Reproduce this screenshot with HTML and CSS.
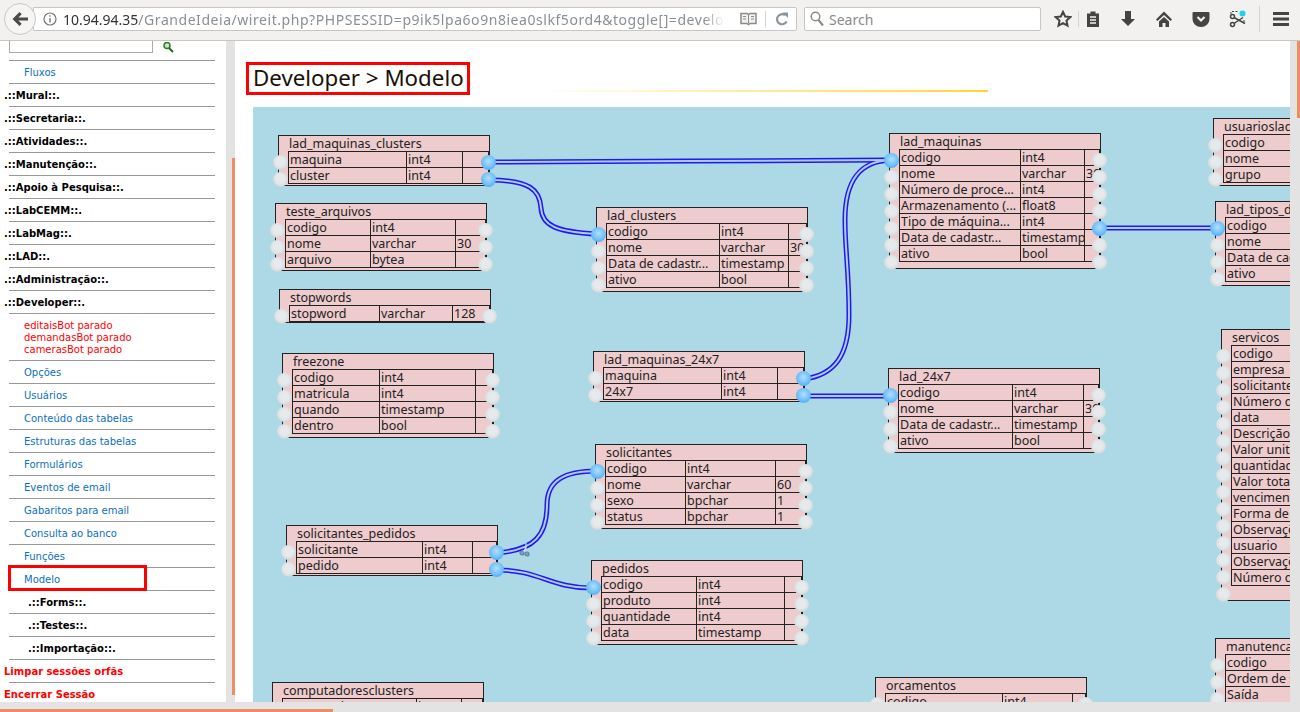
FILE: index.html
```html
<!DOCTYPE html>
<html lang="en">
<head>
  <meta charset="UTF-8">
  <title>Developer &gt; Modelo</title>
  <link rel="stylesheet" href="styles.css">
</head>
<body>
  <!-- Browser toolbar -->
  <header class="toolbar">
    <button class="back">
      <svg width="18" height="18" viewBox="0 0 18 18"><path d="M1.500 9l7-7 2.200 2.200-3.300 3.200H17v3.200H7.400l3.300 3.200-2.200 2.200z" fill="#4a4a4a"/></svg>
    </button>
    <div class="urlbar">
      <svg class="info" width="14" height="14" viewBox="0 0 14 14"><circle cx="7" cy="7" r="6" fill="none" stroke="#777" stroke-width="1.200"/><path d="M6.300 6h1.400v4.500H6.300zM6.300 3.300h1.400v1.400H6.300z" fill="#777"/></svg>
      <span class="url"><b>10.94.94.35</b>/GrandeIdeia/wireit.php?PHPSESSID=p9ik5lpa6o9n8iea0slkf5ord4&amp;toggle[]=developer</span>
      <svg class="book" width="17" height="14" viewBox="0 0 17 14"><path d="M1 1.500h6l1.500 1 1.500-1h6v10h-6l-1.500 1-1.500-1H1z" fill="#f2f1ef" stroke="#8a8a8a" stroke-width="1.500"/><path d="M8.500 3v8M3 4.500h3M3 7h3M11 4.500h3M11 7h3" stroke="#8a8a8a"/></svg>
      <span class="url-sep"></span>
      <svg class="reload" width="14" height="14" viewBox="0 0 14 14"><path d="M11.500 9.500A5 5 0 1 1 10 3.200" fill="none" stroke="#8a949c" stroke-width="2.200"/><path d="M7.500 0.500h5.500v5.500z" fill="#8a949c"/></svg>
    </div>
    <div class="searchbar">
      <svg width="14" height="16" viewBox="0 0 14 16"><circle cx="5.500" cy="5.500" r="4.300" fill="none" stroke="#8a8a8a" stroke-width="1.500"/><path d="M8.500 9l4.500 5.500" stroke="#8a8a8a" stroke-width="2"/></svg>
      <span>Search</span>
    </div>
    <div class="tools">
      <svg class="tool-star" width="18" height="18" viewBox="0 0 18 18"><path d="M9 1.800l2.200 4.700 5.100.6-3.800 3.500 1 5.100L9 13.200l-4.500 2.500 1-5.100-3.800-3.500 5.100-.6z" fill="none" stroke="#444" stroke-width="2"/></svg>
      <span class="tool-sep"></span>
      <svg class="tool-clip" width="16" height="18" viewBox="0 0 16 18"><path d="M2 3.500h3.500V1.500h5v2H14V17H2z" fill="#444"/><path d="M5 7h6M5 10h6M5 13h6" stroke="#f2f1ef" stroke-width="1.400"/></svg>
      <svg class="tool-down" width="16" height="18" viewBox="0 0 16 18"><path d="M5 1h6v8h4l-7 7-7-7h4z" fill="#444"/></svg>
      <svg class="tool-home" width="18" height="18" viewBox="0 0 18 18"><path d="M9 1.500L1 9.500l1.500 1.500L9 5l6.500 6 1.500-1.500z" fill="#444"/><path d="M4 11.500L9 7l5 4.500V17h-3.500v-4h-3v4H4z" fill="#444"/></svg>
      <svg class="tool-pocket" width="18" height="18" viewBox="0 0 18 18"><path d="M1.500 2h15a1 1 0 0 1 1 1v6a8.500 8 0 0 1-17 0V3a1 1 0 0 1 1-1z" fill="#444"/><path d="M5.500 7L9 10.500 12.500 7" fill="none" stroke="#f2f1ef" stroke-width="2.200"/></svg>
      <svg class="tool-cut" width="18" height="18" viewBox="0 0 18 18"><circle cx="3.500" cy="14.500" r="2" fill="none" stroke="#444" stroke-width="1.500"/><circle cx="3.500" cy="6.500" r="2" fill="none" stroke="#444" stroke-width="1.500"/><path d="M5 7.500l11 6M5 13.500l9-6" stroke="#444" stroke-width="1.500"/><path d="M3 1.500h7M2 2v2M15 10v3" stroke="#444" stroke-dasharray="2 1.500"/><circle cx="13.500" cy="3.500" r="3" fill="#12d5ef"/></svg>
      <span class="tool-sep tool-sep-wide"></span>
      <svg class="tool-menu" width="18" height="18" viewBox="0 0 18 18"><path d="M1 3.500h16M1 9h16M1 14.500h16" stroke="#444" stroke-width="2.800"/></svg>
    </div>
  </header>

  <div class="page">
    <div class="page-row">
      <!-- Left menu frame -->
      <nav class="sidebar">
        <div class="menu-search">
          <input type="text" class="menu-input">
          <svg width="11" height="11" viewBox="0 0 11 11"><circle cx="4" cy="3.500" r="3" fill="#cfe8c0" stroke="#2f7d2f" stroke-width="1.500"/><path d="M6 6l4 4" stroke="#1f6a1f" stroke-width="2"/></svg>
        </div>
        <a class="item link">Fluxos</a>
        <a class="item head">.::Mural::.</a>
        <a class="item head">.::Secretaria::.</a>
        <a class="item head">.::Atividades::.</a>
        <a class="item head">.::Manutenção::.</a>
        <a class="item head">.::Apoio à Pesquisa::.</a>
        <a class="item head">.::LabCEMM::.</a>
        <a class="item head">.::LabMag::.</a>
        <a class="item head">.::LAD::.</a>
        <a class="item head">.::Administração::.</a>
        <a class="item head">.::Developer::.</a>
        <div class="item bots">editaisBot parado<br>demandasBot parado<br>camerasBot parado</div>
        <a class="item link">Opções</a>
        <a class="item link">Usuários</a>
        <a class="item link">Conteúdo das tabelas</a>
        <a class="item link">Estruturas das tabelas</a>
        <a class="item link">Formulários</a>
        <a class="item link">Eventos de email</a>
        <a class="item link">Gabaritos para email</a>
        <a class="item link">Consulta ao banco</a>
        <a class="item link">Funções</a>
        <a class="item link">Modelo</a>
        <a class="item head sub">.::Forms::.</a>
        <a class="item head sub">.::Testes::.</a>
        <a class="item head sub">.::Importação::.</a>
        <a class="item danger">Limpar sessões orfãs</a>
        <a class="item danger">Encerrar Sessão</a>
        <span class="mark-modelo"></span>
      </nav>
      <div class="frame-scroll"><span class="frame-thumb"></span></div>

      <!-- Content frame -->
      <main class="content">
        <div class="title-row">
          <h1 class="title">Developer &gt; Modelo</h1>
          <span class="title-rule"></span>
        </div>
        <div class="canvas">
          <div class="node n-clusters">
            <div class="node-title">lad_maquinas_clusters</div>
            <table><tr><td>maquina</td><td>int4</td><td></td></tr><tr><td>cluster</td><td>int4</td><td></td></tr></table>
            <div class="terms left"><i></i><i></i></div>
            <div class="terms right"><i class="on"></i><i class="on"></i></div>
          </div>
          <div class="node n-arquivos">
            <div class="node-title">teste_arquivos</div>
            <table><tr><td>codigo</td><td>int4</td><td></td></tr><tr><td>nome</td><td>varchar</td><td>30</td></tr><tr><td>arquivo</td><td>bytea</td><td></td></tr></table>
            <div class="terms left"><i></i><i></i><i></i></div>
            <div class="terms right"><i></i><i></i><i></i></div>
          </div>
          <div class="node n-lclusters">
            <div class="node-title">lad_clusters</div>
            <table><tr><td>codigo</td><td>int4</td><td></td></tr><tr><td>nome</td><td>varchar</td><td>30</td></tr><tr><td>Data de cadastr...</td><td>timestamp</td><td></td></tr><tr><td>ativo</td><td>bool</td><td></td></tr></table>
            <div class="terms left"><i class="on"></i><i></i><i></i><i></i></div>
            <div class="terms right"><i></i><i></i><i></i><i></i></div>
          </div>
          <div class="node n-stopwords">
            <div class="node-title">stopwords</div>
            <table><tr><td>stopword</td><td>varchar</td><td>128</td></tr></table>
            <div class="terms left"><i></i></div>
            <div class="terms right"><i></i></div>
          </div>
          <div class="node n-freezone">
            <div class="node-title">freezone</div>
            <table><tr><td>codigo</td><td>int4</td><td></td></tr><tr><td>matricula</td><td>int4</td><td></td></tr><tr><td>quando</td><td>timestamp</td><td></td></tr><tr><td>dentro</td><td>bool</td><td></td></tr></table>
            <div class="terms left"><i></i><i></i><i></i><i></i></div>
            <div class="terms right"><i></i><i></i><i></i><i></i></div>
          </div>
          <div class="node n-m24">
            <div class="node-title">lad_maquinas_24x7</div>
            <table><tr><td>maquina</td><td>int4</td><td></td></tr><tr><td>24x7</td><td>int4</td><td></td></tr></table>
            <div class="terms left"><i></i><i></i></div>
            <div class="terms right"><i class="on"></i><i class="on"></i></div>
          </div>
          <div class="node n-l24">
            <div class="node-title">lad_24x7</div>
            <table><tr><td>codigo</td><td>int4</td><td></td></tr><tr><td>nome</td><td>varchar</td><td>30</td></tr><tr><td>Data de cadastr...</td><td>timestamp</td><td></td></tr><tr><td>ativo</td><td>bool</td><td></td></tr></table>
            <div class="terms left"><i class="on"></i><i></i><i></i><i></i></div>
            <div class="terms right"><i></i><i></i><i></i><i></i></div>
          </div>
          <div class="node n-maquinas">
            <div class="node-title">lad_maquinas</div>
            <table><tr><td>codigo</td><td>int4</td><td></td></tr><tr><td>nome</td><td>varchar</td><td>30</td></tr><tr><td>Número de proce...</td><td>int4</td><td></td></tr><tr><td>Armazenamento (...</td><td>float8</td><td></td></tr><tr><td>Tipo de máquina...</td><td>int4</td><td></td></tr><tr><td>Data de cadastr...</td><td>timestamp</td><td></td></tr><tr><td>ativo</td><td>bool</td><td></td></tr></table>
            <div class="terms left"><i class="on"></i><i></i><i></i><i></i><i></i><i></i><i></i></div>
            <div class="terms right"><i></i><i></i><i></i><i></i><i class="on"></i><i></i><i></i></div>
          </div>
          <div class="node n-solic">
            <div class="node-title">solicitantes</div>
            <table><tr><td>codigo</td><td>int4</td><td></td></tr><tr><td>nome</td><td>varchar</td><td>60</td></tr><tr><td>sexo</td><td>bpchar</td><td>1</td></tr><tr><td>status</td><td>bpchar</td><td>1</td></tr></table>
            <div class="terms left"><i class="on"></i><i></i><i></i><i></i></div>
            <div class="terms right"><i></i><i></i><i></i><i></i></div>
          </div>
          <div class="node n-solped">
            <div class="node-title">solicitantes_pedidos</div>
            <table><tr><td>solicitante</td><td>int4</td><td></td></tr><tr><td>pedido</td><td>int4</td><td></td></tr></table>
            <div class="terms left"><i></i><i></i></div>
            <div class="terms right"><i class="on"></i><i class="on"></i></div>
          </div>
          <div class="node n-pedidos">
            <div class="node-title">pedidos</div>
            <table><tr><td>codigo</td><td>int4</td><td></td></tr><tr><td>produto</td><td>int4</td><td></td></tr><tr><td>quantidade</td><td>int4</td><td></td></tr><tr><td>data</td><td>timestamp</td><td></td></tr></table>
            <div class="terms left"><i class="on"></i><i></i><i></i><i></i></div>
            <div class="terms right"><i></i><i></i><i></i><i></i></div>
          </div>
          <div class="node n-comp">
            <div class="node-title">computadoresclusters</div>
            <table><tr><td>computador</td><td>int4</td><td></td></tr><tr><td>cluster</td><td>int4</td><td></td></tr></table>
          </div>
          <div class="node n-orc">
            <div class="node-title">orcamentos</div>
            <table><tr><td>codigo</td><td>int4</td><td></td></tr><tr><td>nome</td><td>varchar</td><td></td></tr></table>
            <div class="terms left"><i></i></div>
            <div class="terms right"><i></i></div>
          </div>
          <div class="node n-usu">
            <div class="node-title">usuarioslad</div>
            <table><tr><td>codigo</td><td>int4</td><td></td></tr><tr><td>nome</td><td>varchar</td><td></td></tr><tr><td>grupo</td><td>int4</td><td></td></tr></table>
            <div class="terms left"><i></i><i></i><i></i></div>
          </div>
          <div class="node n-tipos">
            <div class="node-title">lad_tipos_de_maquinas</div>
            <table><tr><td>codigo</td><td>int4</td><td></td></tr><tr><td>nome</td><td>varchar</td><td></td></tr><tr><td>Data de cadastr...</td><td>timestamp</td><td></td></tr><tr><td>ativo</td><td>bool</td><td></td></tr></table>
            <div class="terms left"><i class="on"></i><i></i><i></i><i></i></div>
          </div>
          <div class="node n-serv">
            <div class="node-title">servicos</div>
            <table><tr><td>codigo</td><td>int4</td><td></td></tr><tr><td>empresa</td><td>int4</td><td></td></tr><tr><td>solicitante</td><td>int4</td><td></td></tr><tr><td>Número de pedido</td><td>int4</td><td></td></tr><tr><td>data</td><td>date</td><td></td></tr><tr><td>Descrição</td><td>text</td><td></td></tr><tr><td>Valor unitário</td><td>float8</td><td></td></tr><tr><td>quantidade</td><td>int4</td><td></td></tr><tr><td>Valor total</td><td>float8</td><td></td></tr><tr><td>vencimento</td><td>date</td><td></td></tr><tr><td>Forma de pag</td><td>text</td><td></td></tr><tr><td>Observações</td><td>text</td><td></td></tr><tr><td>usuario</td><td>int4</td><td></td></tr><tr><td>Observações</td><td>text</td><td></td></tr><tr><td>Número de nota</td><td>int4</td><td></td></tr></table>
            <div class="terms left"><i></i><i></i><i></i><i></i><i></i><i></i><i></i><i></i><i></i><i></i><i></i><i></i><i></i><i></i><i></i></div>
          </div>
          <div class="node n-manut">
            <div class="node-title">manutencao</div>
            <table><tr><td>codigo</td><td>int4</td><td></td></tr><tr><td>Ordem de serviço</td><td>int4</td><td></td></tr><tr><td>Saída</td><td>date</td><td></td></tr></table>
            <div class="terms left"><i></i><i></i><i></i></div>
          </div>

          <!-- Wires between the tables, in page coordinates -->
          <svg class="wires" width="1037" height="595">
            <g transform="translate(-253 -107)">
              <g class="wire-out">
                <path d="M489 162C600 162 780 160 891 160"/>
                <path d="M489 180C530 180 540 190 541 208C542 225 555 232 597 234"/>
                <path d="M804 379C835 375 849 355 849 315C849 270 845 250 845 220C845 180 860 161 891 160"/>
                <path d="M804 396H890"/>
                <path d="M1100 228H1217"/>
                <path d="M497 553C535 550 547 535 547 505C547 480 565 471 597 471"/>
                <path d="M497 570C540 570 550 588 592 588"/>
              </g>
              <g class="wire-in">
                <path d="M489 162C600 162 780 160 891 160"/>
                <path d="M489 180C530 180 540 190 541 208C542 225 555 232 597 234"/>
                <path d="M804 379C835 375 849 355 849 315C849 270 845 250 845 220C845 180 860 161 891 160"/>
                <path d="M804 396H890"/>
                <path d="M1100 228H1217"/>
                <path d="M497 553C535 550 547 535 547 505C547 480 565 471 597 471"/>
                <path d="M497 570C540 570 550 588 592 588"/>
              </g>
            </g>
          </svg>
          <svg class="scissor" width="12" height="14" viewBox="0 0 12 14"><circle cx="3" cy="10" r="2" fill="#7da4c0" stroke="#5d86a5" stroke-width="1.200"/><circle cx="8" cy="11" r="2" fill="#7da4c0" stroke="#5d86a5" stroke-width="1.200"/><path d="M7 8L7 0M5 9L7 3" stroke="#c5dbe8" stroke-width="1.200"/></svg>
        </div>
      </main>
      <div class="page-scroll"><span class="page-thumb"></span></div>
    </div>
    <div class="bottom-scroll"><span class="bottom-thumb"></span></div>
  </div>
</body>
</html>
```
FILE: styles.css
```css
/* General styles */
* {
  box-sizing: border-box;
}

html, body {
  margin: 0;
  height: 100%;
  overflow: hidden;
}

body {
  display: flex;
  flex-direction: column;
  font-family: "DejaVu Sans", sans-serif;
  background-color: #fff;
}

/* Browser toolbar */
.toolbar {
  display: flex;
  align-items: center;
  height: 41px;
  flex: none;
  padding: 0 0 2px 4px;
  background-color: #f2f1ef;
  border-bottom: 1px solid #c8c6c3;
  font-family: "Noto Sans", sans-serif;
}

.back {
  display: flex;
  align-items: center;
  justify-content: center;
  width: 32px;
  height: 32px;
  flex: none;
  padding: 0;
  border: 1px solid #c9c7c4;
  border-radius: 50%;
  background-color: #f6f5f3;
  position: relative;
  z-index: 1;
}

.urlbar {
  display: flex;
  align-items: center;
  width: 764px;
  height: 24px;
  margin-left: -3px;
  padding-left: 9px;
  background-color: #fff;
  border: 1px solid #c8c6c3;
  border-radius: 0 2px 2px 0;
}

.url {
  margin-left: 6px;
  width: 668px;
  flex: none;
  overflow: hidden;
  white-space: nowrap;
  font-size: 14px;
  letter-spacing: 0.55px;
  color: #8a8f93;
  -webkit-mask-image: linear-gradient(to right, #000 96%, transparent 99%);
  mask-image: linear-gradient(to right, #000 96%, transparent 99%);
}

.url b {
  font-weight: 400;
  letter-spacing: 0;
  color: #333;
}

.book {
  margin-left: 9px;
  flex: none;
}

.url-sep {
  width: 1px;
  height: 16px;
  margin-left: 8px;
  background-color: #d5d3d0;
  flex: none;
}

.reload {
  margin-left: 9px;
  flex: none;
}

.searchbar {
  display: flex;
  align-items: center;
  gap: 5px;
  width: 237px;
  height: 24px;
  margin-left: 7px;
  padding-left: 5px;
  background-color: #fff;
  border: 1px solid #c8c6c3;
  border-radius: 2px;
  font-size: 14px;
  color: #8a8a8a;
}

.tools {
  display: flex;
  align-items: center;
  margin-left: 13px;
}

.tools svg {
  flex: none;
}

.tool-sep {
  width: 1px;
  height: 16px;
  margin: 0 6px 0 6px;
  background-color: #d5d3d0;
}

.tool-sep-wide {
  height: 26px;
  margin: 0 12px 0 12px;
}

.tool-down, .tool-home, .tool-pocket, .tool-cut {
  margin-left: 19px;
}

/* Page area with frames */
.page {
  flex: 1;
  display: flex;
  flex-direction: column;
  min-height: 0;
}

.page-row {
  flex: 1;
  display: flex;
  min-height: 0;
}

.bottom-scroll {
  height: 10px;
  flex: none;
  display: flex;
  align-items: flex-end;
  background-color: #e3e3e3;
}

.bottom-thumb {
  display: block;
  width: 333px;
  height: 3px;
  background-color: #f08c64;
}

/* Left menu */
.sidebar {
  position: relative;
  width: 226px;
  flex: none;
  padding-left: 9px;
  overflow: hidden;
  font-size: 10px;
}

.menu-search {
  display: flex;
  align-items: flex-start;
  height: 20px;
  width: 206px;
  border-bottom: 1px solid #999;
}

.menu-input {
  width: 144px;
  height: 13px;
  margin: -1px 0 0 0;
  padding: 0;
  border: 1px solid #aaa;
  border-top: 0;
  background-color: #fff;
}

.menu-search svg {
  margin: 1px 0 0 10px;
}

.item {
  display: flex;
  align-items: center;
  width: 206px;
  height: 23px;
  padding-left: 15px;
  border-bottom: 1px solid #999;
}

.link {
  color: #0b6fc2;
}

.head {
  margin-left: 0;
  padding-left: 0;
  font-weight: 700;
  color: #000;
  text-indent: -5px;
}

.sub {
  padding-left: 24px;
}

.bots {
  display: block;
  height: 47px;
  padding-top: 6px;
  line-height: 12px;
  color: #f00;
}

.danger {
  padding-left: 0;
  text-indent: -5px;
  font-weight: 700;
  color: #f00;
  border-bottom: 1px solid #999;
}

.mark-modelo {
  position: absolute;
  left: 8px;
  top: 524px;
  width: 139px;
  height: 26px;
  border: 3px solid #f00;
}

.frame-scroll {
  width: 9px;
  flex: none;
  position: relative;
  background-color: #e3e3e3;
}

.frame-thumb {
  position: absolute;
  left: 6px;
  top: 117px;
  width: 3px;
  height: 537px;
  background-color: #f08c64;
}

/* Content frame */
.content {
  flex: 1;
  min-width: 0;
  padding-left: 18px;
  overflow: hidden;
}

.title-row {
  display: flex;
  align-items: flex-end;
  height: 66px;
  margin-left: -7px;
  padding-bottom: 12px;
}

.title {
  margin: 0;
  width: 224px;
  height: 33px;
  flex: none;
  padding: 0 4px;
  border: 3px solid #f00;
  font-family: "Noto Sans", sans-serif;
  font-size: 22.3px;
  font-weight: 400;
  line-height: 26px;
  color: #1a1008;
  white-space: nowrap;
}

.title-rule {
  width: 450px;
  height: 2px;
  margin: 0 0 3px 68px;
  background: linear-gradient(to right, #fff, #ffd633);
}

.canvas {
  position: relative;
  height: 595px;
  background-color: #add8e6;
  overflow: hidden;
  font-family: "Noto Sans", sans-serif;
  font-size: 12.5px;
  color: #222;
}

.wires {
  position: absolute;
  left: 0;
  top: 0;
}

.wire-out path, .wire-in path {
  fill: none;
}

.wire-out path {
  stroke: #1c1cf0;
  stroke-width: 5;
}

.wire-in path {
  stroke: #b4c8f0;
  stroke-width: 2;
}

.scissor {
  position: absolute;
  left: 266px;
  top: 436px;
}

/* Table nodes, positions are relative to the canvas */
.node {
  position: absolute;
  left: var(--x);
  top: var(--y);
  width: 212px;
  height: var(--h);
  padding-left: 9px;
  background-color: #eecbcd;
  border: 1px solid #222;
}

.node-title {
  height: 15px;
  padding-left: 1px;
  line-height: 15px;
  white-space: nowrap;
}

.node table {
  table-layout: fixed;
  width: 201px;
  border-collapse: collapse;
}

.node td {
  height: 16px;
  padding: 0 0 0 1px;
  border: 1px solid #222;
  line-height: 14px;
  white-space: nowrap;
  overflow: hidden;
}

.node td:nth-child(1) {
  width: var(--c1);
}

.node td:nth-child(2) {
  width: var(--c2);
}

.terms {
  position: absolute;
  top: 19px;
  display: flex;
  flex-direction: column;
  gap: 2px;
  z-index: 2;
}

.terms.left {
  left: -6px;
}

.terms.right {
  right: -7px;
}

.terms i {
  display: block;
  width: 15px;
  height: 15px;
  border-radius: 50%;
  background: radial-gradient(circle at 50% 45%, #e6eaec 35%, #dbe0e2 60%, #c0c7ca 85%, #b4bcc0 100%);
}

.terms i.on {
  background: radial-gradient(circle at 50% 42%, #b2defc 0%, #74c2fa 50%, #4bacf6 80%, #2f9bf0 100%);
}

.n-clusters { --x: 25px; --y: 28px; --h: 51px; --c1: 118px; --c2: 56px; }
.n-arquivos { --x: 22px; --y: 96px; --h: 68px; --c1: 85px; --c2: 85px; }
.n-lclusters { --x: 343px; --y: 100px; --h: 85px; --c1: 113px; --c2: 69px; }
.n-stopwords { --x: 26px; --y: 182px; --h: 34px; --c1: 90px; --c2: 73px; }
.n-freezone { --x: 29px; --y: 246px; --h: 85px; --c1: 87px; --c2: 96px; }
.n-m24 { --x: 340px; --y: 244px; --h: 51px; --c1: 118px; --c2: 56px; }
.n-l24 { --x: 635px; --y: 261px; --h: 85px; --c1: 114px; --c2: 71px; }
.n-maquinas { --x: 636px; --y: 26px; --h: 136px; --c1: 121px; --c2: 64px; }
.n-solic { --x: 342px; --y: 337px; --h: 85px; --c1: 80px; --c2: 90px; }
.n-solped { --x: 33px; --y: 418px; --h: 51px; --c1: 126px; --c2: 50px; }
.n-pedidos { --x: 338px; --y: 453px; --h: 85px; --c1: 95px; --c2: 88px; }
.n-comp { --x: 19px; --y: 575px; --h: 51px; --c1: 134px; --c2: 45px; }
.n-orc { --x: 622px; --y: 570px; --h: 85px; --c1: 117px; --c2: 70px; }
.n-usu { --x: 960px; --y: 11px; --h: 68px; --c1: 116px; --c2: 65px; }
.n-tipos { --x: 962px; --y: 94px; --h: 85px; --c1: 116px; --c2: 65px; }
.n-serv { --x: 968px; --y: 222px; --h: 272px; --c1: 116px; --c2: 65px; }
.n-manut { --x: 962px; --y: 531px; --h: 68px; --c1: 116px; --c2: 65px; }

/* Right scrollbar */
.page-scroll {
  width: 10px;
  flex: none;
  background-color: #e3e3e3;
}

.page-thumb {
  display: block;
  width: 3px;
  height: 77px;
  margin-left: 7px;
  background-color: #f08c64;
}
```
